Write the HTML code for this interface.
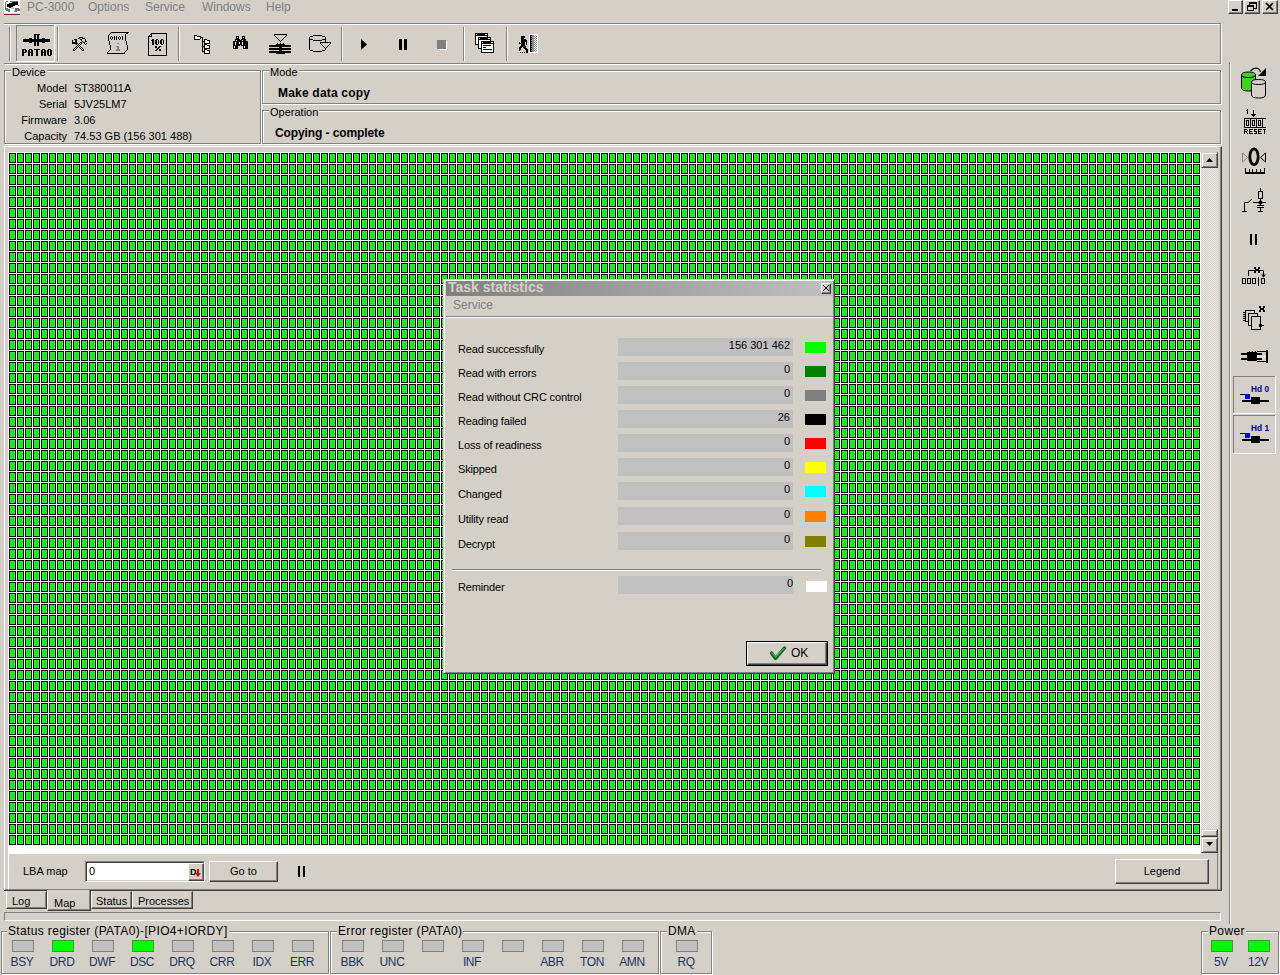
<!DOCTYPE html>
<html><head><meta charset="utf-8">
<style>
html,body{margin:0;padding:0;}
body{width:1280px;height:975px;overflow:hidden;background:#d4d0c8;position:relative;font-family:"Liberation Sans",sans-serif;font-size:11px;color:#000;}
.a{position:absolute;}
.t{position:absolute;white-space:nowrap;line-height:15px;}
.etch{position:absolute;box-sizing:border-box;border:1px solid #808080;box-shadow:inset 1px 1px 0 #fff,1px 1px 0 #fff;}
.gl{position:absolute;background:#d4d0c8;padding:0 1px;line-height:15px;white-space:nowrap;}
.btn{position:absolute;box-sizing:border-box;background:#d4d0c8;border:1px solid;border-color:#fff #404040 #404040 #fff;box-shadow:inset -1px -1px 0 #808080;text-align:center;}
.sunk{position:absolute;box-sizing:border-box;border:1px solid;border-color:#808080 #fff #fff #808080;box-shadow:inset 1px 1px 0 #404040,inset -1px -1px 0 #d4d0c8;}
.menu{color:#808080;font-size:12px;}
.led{position:absolute;box-sizing:border-box;width:22px;height:12px;border:1px solid #808080;background:#c0c0c0;}
.led.on{background:#00ff00;border-color:#3a9a3a;}
.lbl{position:absolute;margin-left:-1px;width:40px;text-align:center;color:#1c355e;font-size:12px;line-height:15px;letter-spacing:-0.4px;}
.vbox{position:absolute;left:618px;width:175px;height:18px;background:#c0c0c0;}
.val{position:absolute;right:3px;top:1px;line-height:13px;}
.rl{position:absolute;left:458px;line-height:15px;white-space:nowrap;letter-spacing:-0.15px;}
.sw{position:absolute;left:805px;width:21px;height:11px;}
</style></head><body>

<!-- menu bar -->
<div class="a" style="left:4px;top:0;width:16px;height:14px;background:#fff;"></div>
<div class="t menu" style="left:27px;top:0px;">PC-3000</div>
<div class="t menu" style="left:88px;top:0px;">Options</div>
<div class="t menu" style="left:145px;top:0px;">Service</div>
<div class="t menu" style="left:202px;top:0px;">Windows</div>
<div class="t menu" style="left:266px;top:0px;">Help</div>

<!-- window buttons -->
<div class="btn" style="left:1228px;top:0;width:15px;height:14px;"></div>
<div class="btn" style="left:1244px;top:0;width:16px;height:14px;"></div>
<div class="btn" style="left:1262px;top:0;width:16px;height:14px;"></div>

<!-- toolbar -->
<div class="a" style="left:4px;top:23px;width:1217px;height:41px;box-sizing:border-box;border:1px solid #808080;border-left:none;box-shadow:inset 0 1px 0 #fff,1px 1px 0 #fff;"></div>

<!-- device -->
<div class="etch" style="left:4px;top:70px;width:257px;height:74px;"></div>
<div class="gl" style="left:11px;top:65px;">Device</div>
<div class="t" style="left:0;width:67px;text-align:right;top:81px;">Model</div>
<div class="t" style="left:0;width:67px;text-align:right;top:97px;">Serial</div>
<div class="t" style="left:0;width:67px;text-align:right;top:113px;">Firmware</div>
<div class="t" style="left:0;width:67px;text-align:right;top:129px;">Capacity</div>
<div class="t" style="left:74px;top:81px;">ST380011A</div>
<div class="t" style="left:74px;top:97px;">5JV25LM7</div>
<div class="t" style="left:74px;top:113px;">3.06</div>
<div class="t" style="left:74px;top:129px;">74.53 GB (156 301 488)</div>

<!-- mode / operation -->
<div class="etch" style="left:262px;top:70px;width:959px;height:34px;"></div>
<div class="gl" style="left:269px;top:65px;">Mode</div>
<div class="t" style="left:278px;top:86px;font-weight:bold;font-size:12px;letter-spacing:0.2px;">Make data copy</div>
<div class="etch" style="left:262px;top:110px;width:959px;height:34px;"></div>
<div class="gl" style="left:269px;top:105px;">Operation</div>
<div class="t" style="left:275px;top:126px;font-weight:bold;font-size:12px;letter-spacing:-0.1px;">Copying - complete</div>

<!-- map frame -->
<div class="a" style="left:4px;top:146px;width:1218px;height:745px;box-sizing:border-box;border:1px solid;border-color:#fff #404040 #404040 #fff;box-shadow:inset -1px -1px 0 #808080;"></div>
<div class="a" style="left:8px;top:152px;width:1210px;height:738px;box-sizing:border-box;border:1px solid;border-color:#fff #808080 #808080 #fff;"></div>
<div class="a" style="left:8px;top:152px;width:1193px;height:702px;background:#fff;"></div>
<svg class="a" style="left:9px;top:153px;" width="1191" height="692">
<defs><pattern id="cell" width="8" height="11" patternUnits="userSpaceOnUse">
<rect x="0" y="0" width="7" height="10" fill="#000"/><rect x="1" y="1" width="5" height="8" fill="#3ee43e"/><rect x="2" y="2" width="3" height="6" fill="#10f010"/>
</pattern></defs>
<rect x="0" y="0" width="1191" height="692" fill="url(#cell)"/>
</svg>

<!-- scrollbar -->
<div class="a" style="left:1201px;top:152px;width:17px;height:701px;background-color:#ece9e4;background-image:linear-gradient(45deg,#d4d0c8 25%,transparent 25%,transparent 75%,#d4d0c8 75%),linear-gradient(45deg,#d4d0c8 25%,transparent 25%,transparent 75%,#d4d0c8 75%);background-size:2px 2px;background-position:0 0,1px 1px;"></div>
<div class="btn" style="left:1201px;top:152px;width:17px;height:16px;border-color:#d4d0c8 #404040 #404040 #d4d0c8;box-shadow:inset 1px 1px 0 #fff,inset -1px -1px 0 #808080;"></div>
<div class="btn" style="left:1201px;top:837px;width:17px;height:16px;border-color:#d4d0c8 #404040 #404040 #d4d0c8;box-shadow:inset 1px 1px 0 #fff,inset -1px -1px 0 #808080;"></div>
<div class="btn" style="left:1201px;top:829px;width:17px;height:8px;border-color:#d4d0c8 #404040 #404040 #d4d0c8;box-shadow:inset 1px 1px 0 #fff,inset -1px -1px 0 #808080;"></div>

<!-- LBA row -->
<div class="t" style="left:23px;top:864px;">LBA map</div>
<div class="sunk" style="left:85px;top:861px;width:120px;height:21px;background:#fff;"></div>
<div class="t" style="left:89px;top:864px;">0</div>
<div class="btn" style="left:188px;top:863px;width:16px;height:18px;"></div>
<div class="btn" style="left:209px;top:861px;width:69px;height:21px;line-height:19px;">Go to</div>
<div class="btn" style="left:1115px;top:859px;width:94px;height:25px;line-height:23px;">Legend</div>

<!-- tabs -->
<div class="a" style="left:4px;top:912px;width:1217px;height:9px;box-sizing:border-box;border:1px solid;border-color:#808080 #fff #fff #808080;"></div>

<!-- right separator -->
<div class="a" style="left:1229px;top:62px;width:1px;height:862px;background:#808080;"></div>
<div class="a" style="left:1230px;top:62px;width:1px;height:862px;background:#fff;"></div>

<!-- status registers -->
<div class="etch" style="left:1px;top:931px;width:328px;height:43px;"></div>
<div class="gl" style="left:7px;top:924px;font-size:12px;line-height:15px;letter-spacing:0.35px;">Status register (PATA0)-[PIO4+IORDY]</div>
<div class="etch" style="left:330px;top:931px;width:329px;height:43px;"></div>
<div class="gl" style="left:337px;top:924px;font-size:12px;line-height:15px;letter-spacing:0.35px;">Error register (PATA0)</div>
<div class="etch" style="left:660px;top:931px;width:52px;height:43px;"></div>
<div class="gl" style="left:667px;top:924px;font-size:12px;line-height:15px;letter-spacing:0.35px;">DMA</div>
<div class="etch" style="left:1201px;top:931px;width:78px;height:43px;"></div>
<div class="gl" style="left:1208px;top:924px;font-size:12px;line-height:15px;letter-spacing:0.35px;">Power</div>


<!-- ICONS -->
<svg class="a" style="left:0;top:0;" width="1280" height="975" shape-rendering="crispEdges">
<!-- app icon -->
<rect x="4" y="0" width="16" height="13" fill="#fff"/><rect x="6" y="1" width="2" height="1" fill="#707070"/><rect x="10" y="1" width="8" height="1" fill="#707070"/><rect x="5" y="2" width="1" height="1" fill="#707070"/><rect x="12" y="2" width="6" height="1" fill="#000"/><rect x="5" y="3" width="1" height="1" fill="#707070"/><rect x="9" y="3" width="9" height="1" fill="#000"/><rect x="5" y="4" width="1" height="1" fill="#707070"/><rect x="7" y="4" width="11" height="1" fill="#000"/><rect x="5" y="5" width="1" height="1" fill="#707070"/><rect x="7" y="5" width="8" height="1" fill="#000"/><rect x="18" y="5" width="1" height="1" fill="#707070"/><rect x="5" y="6" width="1" height="1" fill="#707070"/><rect x="7" y="6" width="6" height="1" fill="#000"/><rect x="5" y="7" width="1" height="1" fill="#707070"/><rect x="9" y="7" width="2" height="1" fill="#000"/><rect x="11" y="7" width="3" height="1" fill="#c8c8c8"/><rect x="5" y="8" width="3" height="1" fill="#707070"/><rect x="11" y="8" width="3" height="1" fill="#c8c8c8"/><rect x="15" y="8" width="4" height="1" fill="#707070"/><rect x="5" y="9" width="5" height="1" fill="#707070"/><rect x="15" y="9" width="5" height="1" fill="#707070"/><rect x="6" y="10" width="4" height="1" fill="#707070"/><rect x="15" y="10" width="5" height="1" fill="#707070"/><rect x="8" y="11" width="2" height="1" fill="#707070"/><rect x="14" y="11" width="3" height="1" fill="#707070"/><rect x="4" y="14" width="16" height="1" fill="#702828"/><rect x="4" y="13" width="16" height="1" fill="#f0d8d8"/>
<!-- window buttons glyphs -->
<rect x="1232" y="9" width="6" height="2" fill="#000"/>
<rect x="1249" y="2" width="7" height="6" fill="none" stroke="#000" stroke-width="1"/><rect x="1249" y="2" width="7" height="2" fill="#000"/>
<rect x="1247" y="5" width="6" height="5" fill="#d4d0c8" stroke="#000" stroke-width="1"/><rect x="1247" y="5" width="6" height="2" fill="#000"/>
<path d="M1266 3 L1273 10 M1273 3 L1266 10" stroke="#000" stroke-width="1.6" shape-rendering="auto"/>

<!-- toolbar grip + separators -->
<rect x="9" y="27" width="1" height="34" fill="#808080"/><rect x="10" y="27" width="1" height="34" fill="#fff"/>
<rect x="57" y="27" width="1" height="34" fill="#808080"/><rect x="58" y="27" width="1" height="34" fill="#fff"/>
<rect x="178" y="27" width="1" height="34" fill="#808080"/><rect x="179" y="27" width="1" height="34" fill="#fff"/>
<rect x="341" y="27" width="1" height="34" fill="#808080"/><rect x="342" y="27" width="1" height="34" fill="#fff"/>
<rect x="463" y="27" width="1" height="34" fill="#808080"/><rect x="464" y="27" width="1" height="34" fill="#fff"/>
<rect x="506" y="27" width="1" height="34" fill="#808080"/><rect x="507" y="27" width="1" height="34" fill="#fff"/>
<!-- PATA0 button sunken -->
<rect x="16" y="25" width="38" height="1" fill="#808080"/><rect x="16" y="25" width="1" height="37" fill="#808080"/>
<rect x="16" y="61" width="39" height="1" fill="#fff"/><rect x="54" y="25" width="1" height="37" fill="#fff"/>
<rect x="23" y="39" width="27" height="3" fill="#000"/>
<rect x="29" y="38" width="3" height="5" fill="#000"/><rect x="42" y="38" width="3" height="5" fill="#000"/>
<rect x="34" y="34" width="6" height="1" fill="#000"/>
<rect x="34" y="35" width="2" height="11" fill="#000"/><rect x="37" y="35" width="2" height="11" fill="#000"/>
<rect x="22" y="49" width="4" height="1" fill="#000"/><rect x="29" y="49" width="3" height="1" fill="#000"/><rect x="34" y="49" width="6" height="1" fill="#000"/><rect x="42" y="49" width="3" height="1" fill="#000"/><rect x="48" y="49" width="3" height="1" fill="#000"/><rect x="22" y="50" width="2" height="1" fill="#000"/><rect x="25" y="50" width="2" height="1" fill="#000"/><rect x="28" y="50" width="2" height="1" fill="#000"/><rect x="31" y="50" width="2" height="1" fill="#000"/><rect x="36" y="50" width="2" height="1" fill="#000"/><rect x="41" y="50" width="2" height="1" fill="#000"/><rect x="44" y="50" width="2" height="1" fill="#000"/><rect x="47" y="50" width="2" height="1" fill="#000"/><rect x="50" y="50" width="2" height="1" fill="#000"/><rect x="22" y="51" width="2" height="1" fill="#000"/><rect x="25" y="51" width="2" height="1" fill="#000"/><rect x="28" y="51" width="2" height="1" fill="#000"/><rect x="31" y="51" width="2" height="1" fill="#000"/><rect x="36" y="51" width="2" height="1" fill="#000"/><rect x="41" y="51" width="2" height="1" fill="#000"/><rect x="44" y="51" width="2" height="1" fill="#000"/><rect x="47" y="51" width="2" height="1" fill="#000"/><rect x="50" y="51" width="2" height="1" fill="#000"/><rect x="22" y="52" width="4" height="1" fill="#000"/><rect x="28" y="52" width="5" height="1" fill="#000"/><rect x="36" y="52" width="2" height="1" fill="#000"/><rect x="41" y="52" width="5" height="1" fill="#000"/><rect x="47" y="52" width="2" height="1" fill="#000"/><rect x="50" y="52" width="2" height="1" fill="#000"/><rect x="22" y="53" width="2" height="1" fill="#000"/><rect x="28" y="53" width="2" height="1" fill="#000"/><rect x="31" y="53" width="2" height="1" fill="#000"/><rect x="36" y="53" width="2" height="1" fill="#000"/><rect x="41" y="53" width="2" height="1" fill="#000"/><rect x="44" y="53" width="2" height="1" fill="#000"/><rect x="47" y="53" width="2" height="1" fill="#000"/><rect x="50" y="53" width="2" height="1" fill="#000"/><rect x="22" y="54" width="2" height="1" fill="#000"/><rect x="28" y="54" width="2" height="1" fill="#000"/><rect x="31" y="54" width="2" height="1" fill="#000"/><rect x="36" y="54" width="2" height="1" fill="#000"/><rect x="41" y="54" width="2" height="1" fill="#000"/><rect x="44" y="54" width="2" height="1" fill="#000"/><rect x="47" y="54" width="2" height="1" fill="#000"/><rect x="50" y="54" width="2" height="1" fill="#000"/><rect x="22" y="55" width="2" height="1" fill="#000"/><rect x="28" y="55" width="2" height="1" fill="#000"/><rect x="31" y="55" width="2" height="1" fill="#000"/><rect x="36" y="55" width="2" height="1" fill="#000"/><rect x="41" y="55" width="2" height="1" fill="#000"/><rect x="44" y="55" width="2" height="1" fill="#000"/><rect x="48" y="55" width="3" height="1" fill="#000"/>
<!-- tools -->
<rect x="79" y="37" width="4" height="1" fill="#000"/><rect x="78" y="38" width="2" height="1" fill="#000"/><rect x="82" y="38" width="3" height="1" fill="#000"/><rect x="74" y="39" width="3" height="1" fill="#000"/><rect x="80" y="39" width="2" height="1" fill="#000"/><rect x="85" y="39" width="1" height="1" fill="#000"/><rect x="72" y="40" width="1" height="1" fill="#000"/><rect x="75" y="40" width="2" height="1" fill="#000"/><rect x="81" y="40" width="1" height="1" fill="#000"/><rect x="85" y="40" width="1" height="1" fill="#000"/><rect x="72" y="41" width="1" height="1" fill="#000"/><rect x="75" y="41" width="2" height="1" fill="#000"/><rect x="82" y="41" width="1" height="1" fill="#000"/><rect x="85" y="41" width="2" height="1" fill="#000"/><rect x="72" y="42" width="5" height="1" fill="#000"/><rect x="80" y="42" width="2" height="1" fill="#000"/><rect x="83" y="42" width="2" height="1" fill="#000"/><rect x="72" y="43" width="6" height="1" fill="#000"/><rect x="79" y="43" width="1" height="1" fill="#000"/><rect x="81" y="43" width="1" height="1" fill="#000"/><rect x="84" y="43" width="1" height="1" fill="#000"/><rect x="86" y="43" width="1" height="1" fill="#000"/><rect x="76" y="44" width="1" height="1" fill="#000"/><rect x="78" y="44" width="1" height="1" fill="#000"/><rect x="80" y="44" width="1" height="1" fill="#000"/><rect x="85" y="44" width="1" height="1" fill="#000"/><rect x="77" y="45" width="1" height="1" fill="#000"/><rect x="79" y="45" width="1" height="1" fill="#000"/><rect x="76" y="46" width="1" height="1" fill="#000"/><rect x="78" y="46" width="1" height="1" fill="#000"/><rect x="80" y="46" width="1" height="1" fill="#000"/><rect x="75" y="47" width="1" height="1" fill="#000"/><rect x="77" y="47" width="1" height="1" fill="#000"/><rect x="79" y="47" width="1" height="1" fill="#000"/><rect x="81" y="47" width="1" height="1" fill="#000"/><rect x="74" y="48" width="1" height="1" fill="#000"/><rect x="76" y="48" width="1" height="1" fill="#000"/><rect x="80" y="48" width="1" height="1" fill="#000"/><rect x="82" y="48" width="1" height="1" fill="#000"/><rect x="73" y="49" width="1" height="1" fill="#000"/><rect x="75" y="49" width="1" height="1" fill="#000"/><rect x="81" y="49" width="1" height="1" fill="#000"/><rect x="83" y="49" width="1" height="1" fill="#000"/><rect x="73" y="50" width="2" height="1" fill="#000"/><rect x="82" y="50" width="2" height="1" fill="#000"/>
<!-- scroll icon -->
<rect x="111" y="32" width="18" height="1" fill="#000"/><rect x="110" y="33" width="1" height="1" fill="#000"/><rect x="126" y="33" width="2" height="1" fill="#000"/><rect x="109" y="34" width="1" height="1" fill="#000"/><rect x="125" y="34" width="1" height="1" fill="#000"/><rect x="108" y="35" width="1" height="1" fill="#000"/><rect x="125" y="35" width="1" height="1" fill="#000"/><rect x="108" y="36" width="1" height="1" fill="#000"/><rect x="111" y="36" width="1" height="1" fill="#000"/><rect x="114" y="36" width="1" height="1" fill="#000"/><rect x="116" y="36" width="1" height="1" fill="#000"/><rect x="119" y="36" width="1" height="1" fill="#000"/><rect x="122" y="36" width="1" height="1" fill="#000"/><rect x="125" y="36" width="1" height="1" fill="#000"/><rect x="108" y="37" width="1" height="1" fill="#000"/><rect x="110" y="37" width="1" height="1" fill="#000"/><rect x="112" y="37" width="1" height="1" fill="#000"/><rect x="114" y="37" width="1" height="1" fill="#000"/><rect x="116" y="37" width="1" height="1" fill="#000"/><rect x="118" y="37" width="1" height="1" fill="#000"/><rect x="120" y="37" width="1" height="1" fill="#000"/><rect x="122" y="37" width="1" height="1" fill="#000"/><rect x="125" y="37" width="1" height="1" fill="#000"/><rect x="108" y="38" width="1" height="1" fill="#000"/><rect x="110" y="38" width="1" height="1" fill="#000"/><rect x="112" y="38" width="1" height="1" fill="#000"/><rect x="114" y="38" width="1" height="1" fill="#000"/><rect x="116" y="38" width="1" height="1" fill="#000"/><rect x="118" y="38" width="1" height="1" fill="#000"/><rect x="120" y="38" width="1" height="1" fill="#000"/><rect x="122" y="38" width="1" height="1" fill="#000"/><rect x="125" y="38" width="1" height="1" fill="#000"/><rect x="108" y="39" width="1" height="1" fill="#000"/><rect x="111" y="39" width="1" height="1" fill="#000"/><rect x="114" y="39" width="1" height="1" fill="#000"/><rect x="116" y="39" width="1" height="1" fill="#000"/><rect x="119" y="39" width="1" height="1" fill="#000"/><rect x="122" y="39" width="1" height="1" fill="#000"/><rect x="125" y="39" width="1" height="1" fill="#000"/><rect x="108" y="40" width="1" height="1" fill="#000"/><rect x="125" y="40" width="1" height="1" fill="#000"/><rect x="109" y="41" width="1" height="1" fill="#000"/><rect x="126" y="41" width="1" height="1" fill="#000"/><rect x="109" y="42" width="1" height="1" fill="#000"/><rect x="126" y="42" width="1" height="1" fill="#000"/><rect x="109" y="43" width="1" height="1" fill="#000"/><rect x="117" y="43" width="2" height="1" fill="#888"/><rect x="126" y="43" width="1" height="1" fill="#000"/><rect x="109" y="44" width="1" height="1" fill="#000"/><rect x="126" y="44" width="1" height="1" fill="#000"/><rect x="110" y="45" width="1" height="1" fill="#000"/><rect x="127" y="45" width="1" height="1" fill="#000"/><rect x="110" y="46" width="1" height="1" fill="#000"/><rect x="116" y="46" width="3" height="1" fill="#888"/><rect x="127" y="46" width="1" height="1" fill="#000"/><rect x="110" y="47" width="1" height="1" fill="#000"/><rect x="117" y="47" width="2" height="1" fill="#888"/><rect x="127" y="47" width="1" height="1" fill="#000"/><rect x="110" y="48" width="1" height="1" fill="#000"/><rect x="117" y="48" width="2" height="1" fill="#888"/><rect x="127" y="48" width="1" height="1" fill="#000"/><rect x="110" y="49" width="1" height="1" fill="#000"/><rect x="116" y="49" width="4" height="1" fill="#888"/><rect x="127" y="49" width="1" height="1" fill="#000"/><rect x="109" y="50" width="1" height="1" fill="#000"/><rect x="116" y="50" width="4" height="1" fill="#888"/><rect x="126" y="50" width="1" height="1" fill="#000"/><rect x="108" y="51" width="1" height="1" fill="#000"/><rect x="125" y="51" width="1" height="1" fill="#000"/><rect x="107" y="52" width="1" height="1" fill="#000"/><rect x="124" y="52" width="1" height="1" fill="#000"/><rect x="107" y="53" width="18" height="1" fill="#000"/>
<!-- 100% doc -->
<rect x="151" y="33" width="16" height="1" fill="#000"/><rect x="150" y="34" width="2" height="1" fill="#000"/><rect x="166" y="34" width="1" height="1" fill="#000"/><rect x="149" y="35" width="1" height="1" fill="#000"/><rect x="151" y="35" width="1" height="1" fill="#000"/><rect x="166" y="35" width="1" height="1" fill="#000"/><rect x="148" y="36" width="4" height="1" fill="#000"/><rect x="166" y="36" width="1" height="1" fill="#000"/><rect x="148" y="37" width="1" height="1" fill="#000"/><rect x="166" y="37" width="1" height="1" fill="#000"/><rect x="148" y="38" width="1" height="1" fill="#000"/><rect x="166" y="38" width="1" height="1" fill="#000"/><rect x="148" y="39" width="1" height="1" fill="#000"/><rect x="152" y="39" width="2" height="1" fill="#000"/><rect x="156" y="39" width="2" height="1" fill="#000"/><rect x="161" y="39" width="2" height="1" fill="#000"/><rect x="166" y="39" width="1" height="1" fill="#000"/><rect x="148" y="40" width="1" height="1" fill="#000"/><rect x="151" y="40" width="3" height="1" fill="#000"/><rect x="155" y="40" width="2" height="1" fill="#000"/><rect x="158" y="40" width="1" height="1" fill="#000"/><rect x="160" y="40" width="2" height="1" fill="#000"/><rect x="163" y="40" width="1" height="1" fill="#000"/><rect x="166" y="40" width="1" height="1" fill="#000"/><rect x="148" y="41" width="1" height="1" fill="#000"/><rect x="152" y="41" width="2" height="1" fill="#000"/><rect x="155" y="41" width="2" height="1" fill="#000"/><rect x="158" y="41" width="1" height="1" fill="#000"/><rect x="160" y="41" width="2" height="1" fill="#000"/><rect x="163" y="41" width="1" height="1" fill="#000"/><rect x="166" y="41" width="1" height="1" fill="#000"/><rect x="148" y="42" width="1" height="1" fill="#000"/><rect x="152" y="42" width="2" height="1" fill="#000"/><rect x="155" y="42" width="2" height="1" fill="#000"/><rect x="158" y="42" width="1" height="1" fill="#000"/><rect x="160" y="42" width="2" height="1" fill="#000"/><rect x="163" y="42" width="1" height="1" fill="#000"/><rect x="166" y="42" width="1" height="1" fill="#000"/><rect x="148" y="43" width="1" height="1" fill="#000"/><rect x="152" y="43" width="2" height="1" fill="#000"/><rect x="155" y="43" width="2" height="1" fill="#000"/><rect x="158" y="43" width="1" height="1" fill="#000"/><rect x="160" y="43" width="2" height="1" fill="#000"/><rect x="163" y="43" width="1" height="1" fill="#000"/><rect x="166" y="43" width="1" height="1" fill="#000"/><rect x="148" y="44" width="1" height="1" fill="#000"/><rect x="152" y="44" width="2" height="1" fill="#000"/><rect x="156" y="44" width="2" height="1" fill="#000"/><rect x="161" y="44" width="2" height="1" fill="#000"/><rect x="166" y="44" width="1" height="1" fill="#000"/><rect x="148" y="45" width="1" height="1" fill="#000"/><rect x="166" y="45" width="1" height="1" fill="#000"/><rect x="148" y="46" width="1" height="1" fill="#000"/><rect x="155" y="46" width="2" height="1" fill="#000"/><rect x="159" y="46" width="2" height="1" fill="#000"/><rect x="166" y="46" width="1" height="1" fill="#000"/><rect x="148" y="47" width="1" height="1" fill="#000"/><rect x="155" y="47" width="2" height="1" fill="#000"/><rect x="158" y="47" width="2" height="1" fill="#000"/><rect x="166" y="47" width="1" height="1" fill="#000"/><rect x="148" y="48" width="1" height="1" fill="#000"/><rect x="157" y="48" width="2" height="1" fill="#000"/><rect x="166" y="48" width="1" height="1" fill="#000"/><rect x="148" y="49" width="1" height="1" fill="#000"/><rect x="156" y="49" width="2" height="1" fill="#000"/><rect x="159" y="49" width="2" height="1" fill="#000"/><rect x="166" y="49" width="1" height="1" fill="#000"/><rect x="148" y="50" width="1" height="1" fill="#000"/><rect x="155" y="50" width="2" height="1" fill="#000"/><rect x="159" y="50" width="2" height="1" fill="#000"/><rect x="166" y="50" width="1" height="1" fill="#000"/><rect x="148" y="51" width="1" height="1" fill="#000"/><rect x="166" y="51" width="1" height="1" fill="#000"/><rect x="148" y="52" width="1" height="1" fill="#000"/><rect x="166" y="52" width="1" height="1" fill="#000"/><rect x="148" y="53" width="1" height="1" fill="#000"/><rect x="166" y="53" width="1" height="1" fill="#000"/><rect x="148" y="54" width="1" height="1" fill="#000"/><rect x="166" y="54" width="1" height="1" fill="#000"/><rect x="148" y="55" width="19" height="1" fill="#000"/>
<!-- tree -->
<rect x="194" y="35" width="3" height="1" fill="#000"/><rect x="194" y="36" width="1" height="1" fill="#000"/><rect x="195" y="36" width="2" height="1" fill="#fff"/><rect x="197" y="36" width="4" height="1" fill="#000"/><rect x="194" y="37" width="1" height="1" fill="#000"/><rect x="195" y="37" width="5" height="1" fill="#fff"/><rect x="200" y="37" width="3" height="1" fill="#000"/><rect x="194" y="38" width="1" height="1" fill="#000"/><rect x="195" y="38" width="5" height="1" fill="#fff"/><rect x="200" y="38" width="1" height="1" fill="#000"/><rect x="202" y="38" width="1" height="1" fill="#000"/><rect x="194" y="39" width="6" height="1" fill="#000"/><rect x="202" y="39" width="1" height="1" fill="#000"/><rect x="204" y="39" width="3" height="1" fill="#000"/><rect x="202" y="40" width="1" height="1" fill="#000"/><rect x="204" y="40" width="1" height="1" fill="#000"/><rect x="205" y="40" width="2" height="1" fill="#fff"/><rect x="207" y="40" width="3" height="1" fill="#000"/><rect x="202" y="41" width="3" height="1" fill="#000"/><rect x="205" y="41" width="4" height="1" fill="#fff"/><rect x="209" y="41" width="1" height="1" fill="#000"/><rect x="202" y="42" width="1" height="1" fill="#000"/><rect x="204" y="42" width="1" height="1" fill="#000"/><rect x="205" y="42" width="4" height="1" fill="#fff"/><rect x="209" y="42" width="1" height="1" fill="#000"/><rect x="202" y="43" width="1" height="1" fill="#000"/><rect x="204" y="43" width="6" height="1" fill="#000"/><rect x="202" y="44" width="1" height="1" fill="#000"/><rect x="204" y="44" width="3" height="1" fill="#000"/><rect x="202" y="45" width="1" height="1" fill="#000"/><rect x="204" y="45" width="1" height="1" fill="#000"/><rect x="205" y="45" width="2" height="1" fill="#fff"/><rect x="207" y="45" width="3" height="1" fill="#000"/><rect x="202" y="46" width="3" height="1" fill="#000"/><rect x="205" y="46" width="4" height="1" fill="#fff"/><rect x="209" y="46" width="1" height="1" fill="#000"/><rect x="202" y="47" width="1" height="1" fill="#000"/><rect x="204" y="47" width="1" height="1" fill="#000"/><rect x="205" y="47" width="4" height="1" fill="#fff"/><rect x="209" y="47" width="1" height="1" fill="#000"/><rect x="202" y="48" width="1" height="1" fill="#000"/><rect x="204" y="48" width="6" height="1" fill="#000"/><rect x="202" y="49" width="1" height="1" fill="#000"/><rect x="204" y="49" width="3" height="1" fill="#000"/><rect x="202" y="50" width="1" height="1" fill="#000"/><rect x="204" y="50" width="1" height="1" fill="#000"/><rect x="205" y="50" width="2" height="1" fill="#fff"/><rect x="207" y="50" width="3" height="1" fill="#000"/><rect x="202" y="51" width="3" height="1" fill="#000"/><rect x="205" y="51" width="4" height="1" fill="#fff"/><rect x="209" y="51" width="1" height="1" fill="#000"/><rect x="204" y="52" width="1" height="1" fill="#000"/><rect x="205" y="52" width="4" height="1" fill="#fff"/><rect x="209" y="52" width="1" height="1" fill="#000"/><rect x="204" y="53" width="6" height="1" fill="#000"/>
<!-- binoculars -->
<rect x="236" y="36" width="3" height="1" fill="#000"/><rect x="242" y="36" width="3" height="1" fill="#000"/><rect x="236" y="37" width="1" height="1" fill="#000"/><rect x="237" y="37" width="1" height="1" fill="#fff"/><rect x="238" y="37" width="1" height="1" fill="#000"/><rect x="242" y="37" width="1" height="1" fill="#000"/><rect x="243" y="37" width="1" height="1" fill="#fff"/><rect x="244" y="37" width="1" height="1" fill="#000"/><rect x="236" y="38" width="3" height="1" fill="#000"/><rect x="242" y="38" width="3" height="1" fill="#000"/><rect x="235" y="39" width="5" height="1" fill="#000"/><rect x="241" y="39" width="5" height="1" fill="#000"/><rect x="235" y="40" width="1" height="1" fill="#000"/><rect x="236" y="40" width="1" height="1" fill="#fff"/><rect x="237" y="40" width="5" height="1" fill="#000"/><rect x="242" y="40" width="1" height="1" fill="#fff"/><rect x="243" y="40" width="3" height="1" fill="#000"/><rect x="233" y="41" width="15" height="1" fill="#000"/><rect x="233" y="42" width="2" height="1" fill="#000"/><rect x="235" y="42" width="1" height="1" fill="#fff"/><rect x="236" y="42" width="3" height="1" fill="#000"/><rect x="239" y="42" width="1" height="1" fill="#fff"/><rect x="240" y="42" width="2" height="1" fill="#000"/><rect x="242" y="42" width="1" height="1" fill="#fff"/><rect x="243" y="42" width="5" height="1" fill="#000"/><rect x="233" y="43" width="2" height="1" fill="#000"/><rect x="235" y="43" width="1" height="1" fill="#fff"/><rect x="236" y="43" width="3" height="1" fill="#000"/><rect x="239" y="43" width="1" height="1" fill="#fff"/><rect x="240" y="43" width="2" height="1" fill="#000"/><rect x="242" y="43" width="1" height="1" fill="#fff"/><rect x="243" y="43" width="5" height="1" fill="#000"/><rect x="233" y="44" width="2" height="1" fill="#000"/><rect x="235" y="44" width="1" height="1" fill="#fff"/><rect x="236" y="44" width="6" height="1" fill="#000"/><rect x="242" y="44" width="1" height="1" fill="#fff"/><rect x="243" y="44" width="5" height="1" fill="#000"/><rect x="233" y="45" width="7" height="1" fill="#000"/><rect x="241" y="45" width="7" height="1" fill="#000"/><rect x="233" y="46" width="1" height="1" fill="#000"/><rect x="234" y="46" width="1" height="1" fill="#fff"/><rect x="235" y="46" width="3" height="1" fill="#000"/><rect x="243" y="46" width="1" height="1" fill="#000"/><rect x="244" y="46" width="1" height="1" fill="#fff"/><rect x="245" y="46" width="3" height="1" fill="#000"/><rect x="233" y="47" width="1" height="1" fill="#000"/><rect x="234" y="47" width="1" height="1" fill="#fff"/><rect x="235" y="47" width="3" height="1" fill="#000"/><rect x="243" y="47" width="1" height="1" fill="#000"/><rect x="244" y="47" width="1" height="1" fill="#fff"/><rect x="245" y="47" width="3" height="1" fill="#000"/><rect x="233" y="48" width="5" height="1" fill="#000"/><rect x="243" y="48" width="5" height="1" fill="#000"/>
<!-- triangle + layers -->
<rect x="274" y="34" width="13" height="1" fill="#000"/><rect x="274" y="35" width="1" height="1" fill="#000"/><rect x="286" y="35" width="1" height="1" fill="#000"/><rect x="275" y="36" width="1" height="1" fill="#000"/><rect x="285" y="36" width="1" height="1" fill="#000"/><rect x="276" y="37" width="1" height="1" fill="#000"/><rect x="284" y="37" width="1" height="1" fill="#000"/><rect x="277" y="38" width="1" height="1" fill="#000"/><rect x="283" y="38" width="1" height="1" fill="#000"/><rect x="278" y="39" width="1" height="1" fill="#000"/><rect x="282" y="39" width="1" height="1" fill="#000"/><rect x="279" y="40" width="1" height="1" fill="#000"/><rect x="281" y="40" width="1" height="1" fill="#000"/><rect x="280" y="41" width="1" height="1" fill="#000"/><rect x="277" y="43" width="1" height="1" fill="#000"/><rect x="280" y="43" width="1" height="1" fill="#000"/><rect x="283" y="43" width="1" height="1" fill="#000"/><rect x="276" y="44" width="9" height="1" fill="#000"/><rect x="269" y="45" width="22" height="1" fill="#000"/><rect x="269" y="46" width="22" height="1" fill="#000"/><rect x="279" y="47" width="3" height="1" fill="#000"/><rect x="269" y="48" width="22" height="1" fill="#000"/><rect x="269" y="49" width="22" height="1" fill="#000"/><rect x="279" y="50" width="3" height="1" fill="#000"/><rect x="269" y="51" width="22" height="1" fill="#000"/><rect x="269" y="52" width="22" height="1" fill="#000"/><rect x="276" y="53" width="9" height="1" fill="#000"/>
<!-- disk arrow -->
<rect x="313" y="35" width="9" height="1" fill="#000"/><rect x="310" y="36" width="3" height="1" fill="#000"/><rect x="322" y="36" width="3" height="1" fill="#000"/><rect x="309" y="37" width="1" height="1" fill="#000"/><rect x="325" y="37" width="1" height="1" fill="#000"/><rect x="309" y="38" width="1" height="1" fill="#000"/><rect x="325" y="38" width="1" height="1" fill="#000"/><rect x="309" y="39" width="4" height="1" fill="#000"/><rect x="322" y="39" width="4" height="1" fill="#000"/><rect x="309" y="40" width="1" height="1" fill="#000"/><rect x="313" y="40" width="9" height="1" fill="#000"/><rect x="325" y="40" width="1" height="1" fill="#000"/><rect x="309" y="41" width="1" height="1" fill="#000"/><rect x="325" y="41" width="1" height="1" fill="#000"/><rect x="309" y="42" width="1" height="1" fill="#000"/><rect x="320" y="42" width="11" height="1" fill="#000"/><rect x="309" y="43" width="1" height="1" fill="#000"/><rect x="320" y="43" width="1" height="1" fill="#000"/><rect x="330" y="43" width="1" height="1" fill="#000"/><rect x="309" y="44" width="1" height="1" fill="#000"/><rect x="321" y="44" width="1" height="1" fill="#000"/><rect x="329" y="44" width="1" height="1" fill="#000"/><rect x="309" y="45" width="1" height="1" fill="#000"/><rect x="322" y="45" width="1" height="1" fill="#000"/><rect x="328" y="45" width="1" height="1" fill="#000"/><rect x="309" y="46" width="1" height="1" fill="#000"/><rect x="323" y="46" width="1" height="1" fill="#000"/><rect x="327" y="46" width="1" height="1" fill="#000"/><rect x="309" y="47" width="1" height="1" fill="#000"/><rect x="324" y="47" width="1" height="1" fill="#000"/><rect x="326" y="47" width="1" height="1" fill="#000"/><rect x="309" y="48" width="1" height="1" fill="#000"/><rect x="325" y="48" width="1" height="1" fill="#000"/><rect x="309" y="49" width="1" height="1" fill="#000"/><rect x="325" y="49" width="1" height="1" fill="#000"/><rect x="310" y="50" width="3" height="1" fill="#000"/><rect x="322" y="50" width="3" height="1" fill="#000"/><rect x="313" y="51" width="9" height="1" fill="#000"/>
<!-- play pause stop -->
<path d="M361 39 L367 44.5 L361 50 Z" fill="#000" shape-rendering="auto"/>
<rect x="399" y="39" width="3" height="11" fill="#000"/><rect x="404" y="39" width="3" height="11" fill="#000"/>
<rect x="438" y="41" width="9" height="9" fill="#fff"/><rect x="437" y="40" width="9" height="9" fill="#808080"/>
<!-- windows -->
<rect x="475" y="33" width="13" height="1" fill="#000"/><rect x="475" y="34" width="1" height="1" fill="#000"/><rect x="476" y="34" width="1" height="1" fill="#fff"/><rect x="477" y="34" width="8" height="1" fill="#000"/><rect x="485" y="34" width="2" height="1" fill="#fff"/><rect x="487" y="34" width="1" height="1" fill="#000"/><rect x="475" y="35" width="13" height="1" fill="#000"/><rect x="475" y="36" width="1" height="1" fill="#000"/><rect x="476" y="36" width="11" height="1" fill="#fff"/><rect x="487" y="36" width="1" height="1" fill="#000"/><rect x="475" y="37" width="1" height="1" fill="#000"/><rect x="476" y="37" width="2" height="1" fill="#fff"/><rect x="478" y="37" width="13" height="1" fill="#000"/><rect x="475" y="38" width="1" height="1" fill="#000"/><rect x="476" y="38" width="2" height="1" fill="#fff"/><rect x="478" y="38" width="1" height="1" fill="#000"/><rect x="479" y="38" width="1" height="1" fill="#fff"/><rect x="480" y="38" width="8" height="1" fill="#000"/><rect x="488" y="38" width="2" height="1" fill="#fff"/><rect x="490" y="38" width="1" height="1" fill="#000"/><rect x="475" y="39" width="1" height="1" fill="#000"/><rect x="476" y="39" width="2" height="1" fill="#fff"/><rect x="478" y="39" width="13" height="1" fill="#000"/><rect x="475" y="40" width="1" height="1" fill="#000"/><rect x="476" y="40" width="2" height="1" fill="#fff"/><rect x="478" y="40" width="1" height="1" fill="#000"/><rect x="479" y="40" width="11" height="1" fill="#fff"/><rect x="490" y="40" width="1" height="1" fill="#000"/><rect x="475" y="41" width="1" height="1" fill="#000"/><rect x="476" y="41" width="2" height="1" fill="#fff"/><rect x="478" y="41" width="1" height="1" fill="#000"/><rect x="479" y="41" width="2" height="1" fill="#fff"/><rect x="481" y="41" width="13" height="1" fill="#000"/><rect x="475" y="42" width="1" height="1" fill="#000"/><rect x="476" y="42" width="2" height="1" fill="#fff"/><rect x="478" y="42" width="1" height="1" fill="#000"/><rect x="479" y="42" width="2" height="1" fill="#fff"/><rect x="481" y="42" width="1" height="1" fill="#000"/><rect x="482" y="42" width="1" height="1" fill="#fff"/><rect x="483" y="42" width="8" height="1" fill="#000"/><rect x="491" y="42" width="2" height="1" fill="#fff"/><rect x="493" y="42" width="1" height="1" fill="#000"/><rect x="475" y="43" width="1" height="1" fill="#000"/><rect x="476" y="43" width="2" height="1" fill="#fff"/><rect x="478" y="43" width="1" height="1" fill="#000"/><rect x="479" y="43" width="2" height="1" fill="#fff"/><rect x="481" y="43" width="13" height="1" fill="#000"/><rect x="475" y="44" width="4" height="1" fill="#000"/><rect x="479" y="44" width="2" height="1" fill="#fff"/><rect x="481" y="44" width="1" height="1" fill="#000"/><rect x="482" y="44" width="11" height="1" fill="#fff"/><rect x="493" y="44" width="1" height="1" fill="#000"/><rect x="478" y="45" width="1" height="1" fill="#000"/><rect x="479" y="45" width="2" height="1" fill="#fff"/><rect x="481" y="45" width="1" height="1" fill="#000"/><rect x="482" y="45" width="1" height="1" fill="#fff"/><rect x="483" y="45" width="8" height="1" fill="#000"/><rect x="491" y="45" width="2" height="1" fill="#fff"/><rect x="493" y="45" width="1" height="1" fill="#000"/><rect x="478" y="46" width="1" height="1" fill="#000"/><rect x="479" y="46" width="2" height="1" fill="#fff"/><rect x="481" y="46" width="1" height="1" fill="#000"/><rect x="482" y="46" width="11" height="1" fill="#fff"/><rect x="493" y="46" width="1" height="1" fill="#000"/><rect x="478" y="47" width="1" height="1" fill="#000"/><rect x="479" y="47" width="2" height="1" fill="#fff"/><rect x="481" y="47" width="1" height="1" fill="#000"/><rect x="482" y="47" width="1" height="1" fill="#fff"/><rect x="483" y="47" width="3" height="1" fill="#000"/><rect x="486" y="47" width="7" height="1" fill="#fff"/><rect x="493" y="47" width="1" height="1" fill="#000"/><rect x="478" y="48" width="4" height="1" fill="#000"/><rect x="482" y="48" width="11" height="1" fill="#fff"/><rect x="493" y="48" width="1" height="1" fill="#000"/><rect x="481" y="49" width="1" height="1" fill="#000"/><rect x="482" y="49" width="1" height="1" fill="#fff"/><rect x="483" y="49" width="9" height="1" fill="#000"/><rect x="492" y="49" width="1" height="1" fill="#fff"/><rect x="493" y="49" width="1" height="1" fill="#000"/><rect x="481" y="50" width="1" height="1" fill="#000"/><rect x="482" y="50" width="11" height="1" fill="#fff"/><rect x="493" y="50" width="1" height="1" fill="#000"/><rect x="481" y="51" width="1" height="1" fill="#000"/><rect x="482" y="51" width="11" height="1" fill="#fff"/><rect x="493" y="51" width="1" height="1" fill="#000"/><rect x="481" y="52" width="13" height="1" fill="#000"/>
<!-- running man -->
<rect x="529" y="34" width="9" height="1" fill="#fff"/><rect x="529" y="35" width="1" height="1" fill="#fff"/><rect x="530" y="35" width="2" height="1" fill="#000"/><rect x="532" y="35" width="2" height="1" fill="#8a8a8a"/><rect x="534" y="35" width="1" height="1" fill="#fff"/><rect x="535" y="35" width="1" height="1" fill="#8a8a8a"/><rect x="536" y="35" width="2" height="1" fill="#fff"/><rect x="521" y="36" width="4" height="1" fill="#000"/><rect x="529" y="36" width="1" height="1" fill="#fff"/><rect x="530" y="36" width="1" height="1" fill="#000"/><rect x="531" y="36" width="4" height="1" fill="#8a8a8a"/><rect x="535" y="36" width="1" height="1" fill="#fff"/><rect x="536" y="36" width="1" height="1" fill="#8a8a8a"/><rect x="537" y="36" width="1" height="1" fill="#fff"/><rect x="521" y="37" width="4" height="1" fill="#000"/><rect x="529" y="37" width="1" height="1" fill="#fff"/><rect x="530" y="37" width="2" height="1" fill="#000"/><rect x="532" y="37" width="2" height="1" fill="#8a8a8a"/><rect x="534" y="37" width="1" height="1" fill="#fff"/><rect x="535" y="37" width="1" height="1" fill="#8a8a8a"/><rect x="536" y="37" width="2" height="1" fill="#fff"/><rect x="521" y="38" width="3" height="1" fill="#000"/><rect x="529" y="38" width="1" height="1" fill="#fff"/><rect x="530" y="38" width="1" height="1" fill="#000"/><rect x="531" y="38" width="4" height="1" fill="#8a8a8a"/><rect x="535" y="38" width="1" height="1" fill="#fff"/><rect x="536" y="38" width="1" height="1" fill="#8a8a8a"/><rect x="537" y="38" width="1" height="1" fill="#fff"/><rect x="521" y="39" width="5" height="1" fill="#000"/><rect x="529" y="39" width="1" height="1" fill="#fff"/><rect x="530" y="39" width="2" height="1" fill="#000"/><rect x="532" y="39" width="2" height="1" fill="#8a8a8a"/><rect x="534" y="39" width="1" height="1" fill="#fff"/><rect x="535" y="39" width="1" height="1" fill="#8a8a8a"/><rect x="536" y="39" width="2" height="1" fill="#fff"/><rect x="521" y="40" width="6" height="1" fill="#000"/><rect x="529" y="40" width="1" height="1" fill="#fff"/><rect x="530" y="40" width="1" height="1" fill="#000"/><rect x="531" y="40" width="4" height="1" fill="#8a8a8a"/><rect x="535" y="40" width="1" height="1" fill="#fff"/><rect x="536" y="40" width="1" height="1" fill="#8a8a8a"/><rect x="537" y="40" width="1" height="1" fill="#fff"/><rect x="521" y="41" width="6" height="1" fill="#000"/><rect x="529" y="41" width="1" height="1" fill="#fff"/><rect x="530" y="41" width="2" height="1" fill="#000"/><rect x="532" y="41" width="2" height="1" fill="#8a8a8a"/><rect x="534" y="41" width="1" height="1" fill="#fff"/><rect x="535" y="41" width="1" height="1" fill="#8a8a8a"/><rect x="536" y="41" width="2" height="1" fill="#fff"/><rect x="519" y="42" width="1" height="1" fill="#000"/><rect x="521" y="42" width="4" height="1" fill="#000"/><rect x="526" y="42" width="1" height="1" fill="#000"/><rect x="529" y="42" width="1" height="1" fill="#fff"/><rect x="530" y="42" width="1" height="1" fill="#000"/><rect x="531" y="42" width="4" height="1" fill="#8a8a8a"/><rect x="535" y="42" width="1" height="1" fill="#fff"/><rect x="536" y="42" width="1" height="1" fill="#8a8a8a"/><rect x="537" y="42" width="1" height="1" fill="#fff"/><rect x="519" y="43" width="6" height="1" fill="#000"/><rect x="526" y="43" width="1" height="1" fill="#000"/><rect x="529" y="43" width="1" height="1" fill="#fff"/><rect x="530" y="43" width="2" height="1" fill="#000"/><rect x="532" y="43" width="2" height="1" fill="#8a8a8a"/><rect x="534" y="43" width="1" height="1" fill="#fff"/><rect x="535" y="43" width="1" height="1" fill="#8a8a8a"/><rect x="536" y="43" width="2" height="1" fill="#fff"/><rect x="521" y="44" width="4" height="1" fill="#000"/><rect x="526" y="44" width="1" height="1" fill="#000"/><rect x="529" y="44" width="1" height="1" fill="#fff"/><rect x="530" y="44" width="1" height="1" fill="#000"/><rect x="531" y="44" width="4" height="1" fill="#8a8a8a"/><rect x="535" y="44" width="1" height="1" fill="#fff"/><rect x="536" y="44" width="1" height="1" fill="#8a8a8a"/><rect x="537" y="44" width="1" height="1" fill="#fff"/><rect x="521" y="45" width="4" height="1" fill="#000"/><rect x="529" y="45" width="1" height="1" fill="#fff"/><rect x="530" y="45" width="2" height="1" fill="#000"/><rect x="532" y="45" width="2" height="1" fill="#8a8a8a"/><rect x="534" y="45" width="1" height="1" fill="#fff"/><rect x="535" y="45" width="1" height="1" fill="#8a8a8a"/><rect x="536" y="45" width="2" height="1" fill="#fff"/><rect x="520" y="46" width="6" height="1" fill="#000"/><rect x="529" y="46" width="1" height="1" fill="#fff"/><rect x="530" y="46" width="1" height="1" fill="#000"/><rect x="531" y="46" width="4" height="1" fill="#8a8a8a"/><rect x="535" y="46" width="1" height="1" fill="#fff"/><rect x="536" y="46" width="1" height="1" fill="#8a8a8a"/><rect x="537" y="46" width="1" height="1" fill="#fff"/><rect x="519" y="47" width="3" height="1" fill="#000"/><rect x="523" y="47" width="3" height="1" fill="#000"/><rect x="529" y="47" width="1" height="1" fill="#fff"/><rect x="530" y="47" width="2" height="1" fill="#000"/><rect x="532" y="47" width="2" height="1" fill="#8a8a8a"/><rect x="534" y="47" width="1" height="1" fill="#fff"/><rect x="535" y="47" width="1" height="1" fill="#8a8a8a"/><rect x="536" y="47" width="2" height="1" fill="#fff"/><rect x="519" y="48" width="2" height="1" fill="#000"/><rect x="524" y="48" width="3" height="1" fill="#000"/><rect x="529" y="48" width="1" height="1" fill="#fff"/><rect x="530" y="48" width="1" height="1" fill="#000"/><rect x="531" y="48" width="4" height="1" fill="#8a8a8a"/><rect x="535" y="48" width="1" height="1" fill="#fff"/><rect x="536" y="48" width="1" height="1" fill="#8a8a8a"/><rect x="537" y="48" width="1" height="1" fill="#fff"/><rect x="519" y="49" width="2" height="1" fill="#000"/><rect x="525" y="49" width="3" height="1" fill="#000"/><rect x="529" y="49" width="1" height="1" fill="#fff"/><rect x="530" y="49" width="2" height="1" fill="#000"/><rect x="532" y="49" width="2" height="1" fill="#8a8a8a"/><rect x="534" y="49" width="1" height="1" fill="#fff"/><rect x="535" y="49" width="1" height="1" fill="#8a8a8a"/><rect x="536" y="49" width="2" height="1" fill="#fff"/><rect x="519" y="50" width="1" height="1" fill="#000"/><rect x="526" y="50" width="2" height="1" fill="#000"/><rect x="529" y="50" width="1" height="1" fill="#fff"/><rect x="530" y="50" width="1" height="1" fill="#000"/><rect x="531" y="50" width="4" height="1" fill="#8a8a8a"/><rect x="535" y="50" width="1" height="1" fill="#fff"/><rect x="536" y="50" width="1" height="1" fill="#8a8a8a"/><rect x="537" y="50" width="1" height="1" fill="#fff"/><rect x="526" y="51" width="2" height="1" fill="#000"/><rect x="529" y="51" width="1" height="1" fill="#fff"/><rect x="530" y="51" width="2" height="1" fill="#000"/><rect x="532" y="51" width="2" height="1" fill="#8a8a8a"/><rect x="534" y="51" width="1" height="1" fill="#fff"/><rect x="535" y="51" width="1" height="1" fill="#8a8a8a"/><rect x="536" y="51" width="2" height="1" fill="#fff"/><rect x="520" y="52" width="1" height="1" fill="#000"/><rect x="522" y="52" width="1" height="1" fill="#000"/><rect x="524" y="52" width="1" height="1" fill="#000"/><rect x="526" y="52" width="2" height="1" fill="#000"/><rect x="529" y="52" width="9" height="1" fill="#fff"/>
</svg>


<!-- RIGHT PANEL ICONS -->
<svg class="a" style="left:1230px;top:60px;" width="50" height="400">
<g transform="translate(-1230,-60)">
<!-- db copy -->
<path d="M1241.5 75 L1241.5 88 Q1241.5 91 1248.5 91 Q1255.5 91 1255.5 88 L1255.5 75 Q1255.5 72 1248.5 72 Q1241.5 72 1241.5 75 Z" fill="#40d020" stroke="#000" stroke-width="1"/>
<path d="M1241.5 75 Q1241.5 77.5 1248.5 77.5 Q1255.5 77.5 1255.5 75" fill="none" stroke="#000" stroke-width="1"/>
<path d="M1251.5 82 L1251.5 95 Q1251.5 98 1258.5 98 Q1265.5 98 1265.5 95 L1265.5 82 Q1265.5 79.5 1258.5 79.5 Q1251.5 79.5 1251.5 82 Z" fill="#d4d0c8" stroke="#000" stroke-width="1"/>
<path d="M1251.5 82 Q1251.5 84.5 1258.5 84.5 Q1265.5 84.5 1265.5 82" fill="none" stroke="#000" stroke-width="1"/>
<path d="M1250.5 71 Q1254 67 1258 68.5 Q1260 69.5 1260.5 72" fill="none" stroke="#000" stroke-width="1.2"/>
<path d="M1258 76 L1266 68 L1266 76 Z" fill="#000"/>
<!-- reset -->
<rect x="1247" y="109" width="1" height="1" fill="#000"/><rect x="1246" y="110" width="2" height="1" fill="#000"/><rect x="1253" y="110" width="1" height="1" fill="#000"/><rect x="1247" y="111" width="1" height="1" fill="#000"/><rect x="1253" y="111" width="1" height="1" fill="#000"/><rect x="1247" y="112" width="1" height="1" fill="#000"/><rect x="1253" y="112" width="1" height="1" fill="#000"/><rect x="1247" y="113" width="1" height="1" fill="#000"/><rect x="1253" y="113" width="1" height="1" fill="#000"/><rect x="1251" y="114" width="5" height="1" fill="#000"/><rect x="1252" y="115" width="3" height="1" fill="#000"/><rect x="1253" y="116" width="1" height="1" fill="#000"/><rect x="1244" y="118" width="22" height="1" fill="#000"/><rect x="1244" y="119" width="1" height="1" fill="#000"/><rect x="1250" y="119" width="1" height="1" fill="#000"/><rect x="1256" y="119" width="1" height="1" fill="#000"/><rect x="1262" y="119" width="1" height="1" fill="#000"/><rect x="1244" y="120" width="1" height="1" fill="#000"/><rect x="1246" y="120" width="3" height="1" fill="#000"/><rect x="1250" y="120" width="1" height="1" fill="#000"/><rect x="1252" y="120" width="3" height="1" fill="#000"/><rect x="1256" y="120" width="1" height="1" fill="#000"/><rect x="1258" y="120" width="3" height="1" fill="#000"/><rect x="1262" y="120" width="1" height="1" fill="#000"/><rect x="1244" y="121" width="1" height="1" fill="#000"/><rect x="1246" y="121" width="1" height="1" fill="#000"/><rect x="1248" y="121" width="1" height="1" fill="#000"/><rect x="1250" y="121" width="1" height="1" fill="#000"/><rect x="1252" y="121" width="1" height="1" fill="#000"/><rect x="1254" y="121" width="1" height="1" fill="#000"/><rect x="1256" y="121" width="1" height="1" fill="#000"/><rect x="1258" y="121" width="1" height="1" fill="#000"/><rect x="1260" y="121" width="1" height="1" fill="#000"/><rect x="1262" y="121" width="1" height="1" fill="#000"/><rect x="1244" y="122" width="1" height="1" fill="#000"/><rect x="1246" y="122" width="1" height="1" fill="#000"/><rect x="1248" y="122" width="1" height="1" fill="#000"/><rect x="1250" y="122" width="1" height="1" fill="#000"/><rect x="1252" y="122" width="1" height="1" fill="#000"/><rect x="1254" y="122" width="1" height="1" fill="#000"/><rect x="1256" y="122" width="1" height="1" fill="#000"/><rect x="1258" y="122" width="1" height="1" fill="#000"/><rect x="1260" y="122" width="1" height="1" fill="#000"/><rect x="1262" y="122" width="1" height="1" fill="#000"/><rect x="1244" y="123" width="1" height="1" fill="#000"/><rect x="1246" y="123" width="1" height="1" fill="#000"/><rect x="1248" y="123" width="1" height="1" fill="#000"/><rect x="1250" y="123" width="1" height="1" fill="#000"/><rect x="1252" y="123" width="1" height="1" fill="#000"/><rect x="1254" y="123" width="1" height="1" fill="#000"/><rect x="1256" y="123" width="1" height="1" fill="#000"/><rect x="1258" y="123" width="1" height="1" fill="#000"/><rect x="1260" y="123" width="1" height="1" fill="#000"/><rect x="1262" y="123" width="1" height="1" fill="#000"/><rect x="1244" y="124" width="1" height="1" fill="#000"/><rect x="1246" y="124" width="1" height="1" fill="#000"/><rect x="1248" y="124" width="1" height="1" fill="#000"/><rect x="1250" y="124" width="1" height="1" fill="#000"/><rect x="1252" y="124" width="1" height="1" fill="#000"/><rect x="1254" y="124" width="1" height="1" fill="#000"/><rect x="1256" y="124" width="1" height="1" fill="#000"/><rect x="1258" y="124" width="1" height="1" fill="#000"/><rect x="1260" y="124" width="1" height="1" fill="#000"/><rect x="1262" y="124" width="1" height="1" fill="#000"/><rect x="1244" y="125" width="1" height="1" fill="#000"/><rect x="1246" y="125" width="3" height="1" fill="#000"/><rect x="1250" y="125" width="1" height="1" fill="#000"/><rect x="1252" y="125" width="3" height="1" fill="#000"/><rect x="1256" y="125" width="1" height="1" fill="#000"/><rect x="1258" y="125" width="3" height="1" fill="#000"/><rect x="1262" y="125" width="1" height="1" fill="#000"/><rect x="1244" y="126" width="1" height="1" fill="#000"/><rect x="1250" y="126" width="1" height="1" fill="#000"/><rect x="1256" y="126" width="1" height="1" fill="#000"/><rect x="1262" y="126" width="1" height="1" fill="#000"/><rect x="1244" y="127" width="22" height="1" fill="#000"/><rect x="1244" y="129" width="3" height="1" fill="#000"/><rect x="1249" y="129" width="4" height="1" fill="#000"/><rect x="1254" y="129" width="3" height="1" fill="#000"/><rect x="1258" y="129" width="4" height="1" fill="#000"/><rect x="1263" y="129" width="3" height="1" fill="#000"/><rect x="1244" y="130" width="1" height="1" fill="#000"/><rect x="1247" y="130" width="1" height="1" fill="#000"/><rect x="1249" y="130" width="1" height="1" fill="#000"/><rect x="1254" y="130" width="1" height="1" fill="#000"/><rect x="1258" y="130" width="1" height="1" fill="#000"/><rect x="1264" y="130" width="1" height="1" fill="#000"/><rect x="1244" y="131" width="3" height="1" fill="#000"/><rect x="1249" y="131" width="3" height="1" fill="#000"/><rect x="1254" y="131" width="3" height="1" fill="#000"/><rect x="1258" y="131" width="3" height="1" fill="#000"/><rect x="1264" y="131" width="1" height="1" fill="#000"/><rect x="1244" y="132" width="1" height="1" fill="#000"/><rect x="1246" y="132" width="1" height="1" fill="#000"/><rect x="1249" y="132" width="1" height="1" fill="#000"/><rect x="1256" y="132" width="1" height="1" fill="#000"/><rect x="1258" y="132" width="1" height="1" fill="#000"/><rect x="1264" y="132" width="1" height="1" fill="#000"/><rect x="1244" y="133" width="1" height="1" fill="#000"/><rect x="1247" y="133" width="1" height="1" fill="#000"/><rect x="1249" y="133" width="4" height="1" fill="#000"/><rect x="1254" y="133" width="3" height="1" fill="#000"/><rect x="1258" y="133" width="4" height="1" fill="#000"/><rect x="1264" y="133" width="1" height="1" fill="#000"/>
<!-- 0 ruler -->
<ellipse cx="1254" cy="156.8" rx="4.2" ry="8" fill="none" stroke="#000" stroke-width="2.8"/>
<path d="M1242.5 153 L1247.5 157.5 L1242.5 162 Z" fill="none" stroke="#808080" stroke-width="1"/>
<path d="M1265.5 153 L1260.5 157.5 L1265.5 162 Z" fill="none" stroke="#000" stroke-width="1"/>
<rect x="1245" y="172" width="20" height="2" fill="#000"/><rect x="1245" y="168" width="1" height="4" fill="#000"/><rect x="1264" y="168" width="1" height="4" fill="#000"/><rect x="1249" y="169" width="1" height="3" fill="#000"/><rect x="1252" y="169" width="1" height="3" fill="#000"/><rect x="1256" y="169" width="1" height="3" fill="#000"/><rect x="1260" y="169" width="1" height="3" fill="#000"/>
<!-- circuit -->
<path d="M1242 211.5 L1247 211.5 M1244.5 211.5 L1244.5 202.5 L1248 202.5 L1252 199" fill="none" stroke="#000" stroke-width="1"/>
<path d="M1260.5 188 L1260.5 205 M1260.5 207 L1260.5 212" stroke="#000" stroke-width="1"/>
<rect x="1258.5" y="191.5" width="4" height="7" fill="#d4d0c8" stroke="#000" stroke-width="1"/>
<path d="M1253 202.5 L1266 202.5 M1257 205.5 L1264 205.5 M1257 207.5 L1264 207.5 M1258 211.5 L1263 211.5" stroke="#000" stroke-width="1"/>
<circle cx="1260.5" cy="202.5" r="2" fill="#000"/>
<!-- pause -->
<rect x="1250" y="234" width="2" height="11" fill="#000"/><rect x="1255" y="234" width="2" height="11" fill="#000"/>
<!-- 000|0 -->
<path d="M1248.5 276 L1248.5 270.5 L1263.5 270.5 L1263.5 275" fill="none" stroke="#000" stroke-width="1"/>
<rect x="1254" y="267" width="2" height="2" fill="#000"/><rect x="1258" y="267" width="2" height="2" fill="#000"/><rect x="1255" y="269" width="4" height="2" fill="#000"/><rect x="1254" y="271" width="2" height="2" fill="#000"/><rect x="1258" y="271" width="2" height="2" fill="#000"/>
<path d="M1261 274.5 L1266 274.5 L1263.5 277.5 Z" fill="#000"/>
<rect x="1242.5" y="278.5" width="3" height="5" fill="none" stroke="#000" stroke-width="1"/>
<rect x="1247.5" y="278.5" width="3" height="5" fill="none" stroke="#000" stroke-width="1"/>
<rect x="1252.5" y="278.5" width="3" height="5" fill="none" stroke="#000" stroke-width="1"/>
<path d="M1258.5 277 L1258.5 286" stroke="#000" stroke-width="1"/>
<rect x="1261.5" y="278.5" width="3" height="5" fill="none" stroke="#000" stroke-width="1"/>
<!-- copy pages x -->
<rect x="1245.5" y="310.5" width="9" height="11" fill="#d4d0c8" stroke="#000" stroke-width="1"/>
<rect x="1248.5" y="313.5" width="9" height="12" fill="#d4d0c8" stroke="#000" stroke-width="1"/>
<rect x="1251.5" y="316.5" width="9" height="13" fill="#d4d0c8" stroke="#000" stroke-width="1"/>
<path d="M1243 312.5 L1245 312.5 M1243 314.5 L1245 314.5 M1243 316.5 L1245 316.5 M1243 318.5 L1245 318.5 M1243 320.5 L1245 320.5" stroke="#000" stroke-width="1"/>
<rect x="1259" y="306" width="2" height="2" fill="#000"/><rect x="1263" y="306" width="2" height="2" fill="#000"/><rect x="1260" y="308" width="4" height="2" fill="#000"/><rect x="1259" y="310" width="2" height="2" fill="#000"/><rect x="1263" y="310" width="2" height="2" fill="#000"/>
<rect x="1259" y="324" width="3" height="3" fill="#000"/><rect x="1262" y="325" width="2" height="1" fill="#000"/>
<!-- connector -->
<rect x="1241" y="353" width="21" height="2" fill="#000"/><rect x="1241" y="358" width="21" height="2" fill="#000"/>
<rect x="1247" y="352" width="10" height="9" fill="#000"/><rect x="1249" y="351" width="1" height="1" fill="#000"/><rect x="1252" y="351" width="1" height="1" fill="#000"/><rect x="1255" y="351" width="1" height="1" fill="#000"/>
<rect x="1257" y="355" width="9" height="3" fill="#e0e0e0"/>
<rect x="1266" y="350" width="2" height="13" fill="#000"/><rect x="1257" y="351" width="9" height="1" fill="#000"/><rect x="1257" y="361" width="9" height="1" fill="#000"/>
<!-- Hd buttons -->
<rect x="1233" y="376" width="43" height="1" fill="#808080"/><rect x="1233" y="376" width="1" height="38" fill="#808080"/>
<rect x="1233" y="413" width="43" height="1" fill="#fff"/><rect x="1275" y="376" width="1" height="38" fill="#fff"/>
<rect x="1233" y="415" width="43" height="1" fill="#808080"/><rect x="1233" y="415" width="1" height="39" fill="#808080"/>
<rect x="1233" y="453" width="43" height="1" fill="#fff"/><rect x="1275" y="415" width="1" height="39" fill="#fff"/>
<text x="1251" y="392" font-family="Liberation Sans" font-size="9.5" font-weight="bold" fill="#000090" textLength="18" lengthAdjust="spacingAndGlyphs">Hd 0</text>
<path d="M1240 394.5 L1246 394.5" stroke="#000" stroke-width="1"/><rect x="1245" y="394" width="5" height="5" fill="#0000ff"/>
<rect x="1242" y="400" width="27" height="2" fill="#000"/><rect x="1251" y="397" width="9" height="7" fill="#000"/>
<text x="1251" y="431" font-family="Liberation Sans" font-size="9.5" font-weight="bold" fill="#000090" textLength="18" lengthAdjust="spacingAndGlyphs">Hd 1</text>
<path d="M1240 433.5 L1246 433.5" stroke="#000" stroke-width="1"/><rect x="1245" y="433" width="5" height="5" fill="#0000ff"/>
<rect x="1242" y="439" width="27" height="2" fill="#000"/><rect x="1251" y="436" width="9" height="7" fill="#000"/>
</g>
</svg>

<!-- BOTTOM LEDS -->
<div class="led" style="left:12px;top:940px;"></div>
<div class="led on" style="left:52px;top:940px;"></div>
<div class="led" style="left:92px;top:940px;"></div>
<div class="led on" style="left:132px;top:940px;"></div>
<div class="led" style="left:172px;top:940px;"></div>
<div class="led" style="left:212px;top:940px;"></div>
<div class="led" style="left:252px;top:940px;"></div>
<div class="led" style="left:292px;top:940px;"></div>
<div class="lbl" style="left:3px;top:955px;">BSY</div>
<div class="lbl" style="left:43px;top:955px;">DRD</div>
<div class="lbl" style="left:83px;top:955px;">DWF</div>
<div class="lbl" style="left:123px;top:955px;">DSC</div>
<div class="lbl" style="left:163px;top:955px;">DRQ</div>
<div class="lbl" style="left:203px;top:955px;">CRR</div>
<div class="lbl" style="left:243px;top:955px;">IDX</div>
<div class="lbl" style="left:283px;top:955px;">ERR</div>
<div class="led" style="left:342px;top:940px;"></div>
<div class="led" style="left:382px;top:940px;"></div>
<div class="led" style="left:422px;top:940px;"></div>
<div class="led" style="left:462px;top:940px;"></div>
<div class="led" style="left:502px;top:940px;"></div>
<div class="led" style="left:542px;top:940px;"></div>
<div class="led" style="left:582px;top:940px;"></div>
<div class="led" style="left:622px;top:940px;"></div>
<div class="lbl" style="left:333px;top:955px;">BBK</div>
<div class="lbl" style="left:373px;top:955px;">UNC</div>
<div class="lbl" style="left:453px;top:955px;">INF</div>
<div class="lbl" style="left:533px;top:955px;">ABR</div>
<div class="lbl" style="left:573px;top:955px;">TON</div>
<div class="lbl" style="left:613px;top:955px;">AMN</div>
<div class="led" style="left:676px;top:940px;"></div>
<div class="lbl" style="left:667px;top:955px;">RQ</div>
<div class="led on" style="left:1211px;top:940px;"></div>
<div class="led on" style="left:1248px;top:940px;"></div>
<div class="lbl" style="left:1202px;top:955px;">5V</div>
<div class="lbl" style="left:1239px;top:955px;">12V</div>

<!-- TABS -->
<div class="a" style="left:4px;top:890px;width:1218px;height:1px;background:#404040;"></div>
<div class="a" style="left:6px;top:891px;width:41px;height:18px;box-sizing:border-box;border:1px solid;border-color:transparent #404040 #404040 #fff;box-shadow:inset -1px -1px 0 #808080;"></div>
<div class="t" style="left:12px;top:894px;">Log</div>
<div class="a" style="left:47px;top:890px;width:44px;height:21px;box-sizing:border-box;background:#d4d0c8;border:1px solid;border-top:none;border-color:transparent #404040 #404040 #fff;box-shadow:inset -1px -1px 0 #808080;"></div>
<div class="t" style="left:54px;top:896px;">Map</div>
<div class="a" style="left:91px;top:891px;width:41px;height:18px;box-sizing:border-box;border:1px solid;border-color:transparent #404040 #404040 #fff;box-shadow:inset -1px -1px 0 #808080;"></div>
<div class="t" style="left:96px;top:894px;">Status</div>
<div class="a" style="left:132px;top:891px;width:61px;height:18px;box-sizing:border-box;border:1px solid;border-color:transparent #404040 #404040 #fff;box-shadow:inset -1px -1px 0 #808080;"></div>
<div class="t" style="left:138px;top:894px;">Processes</div>

<!-- misc glyphs -->
<svg class="a" style="left:0;top:0;" width="1280" height="975">
<!-- scrollbar arrows -->
<path d="M1206 162 L1213 162 L1209.5 158 Z" fill="#000"/>
<path d="M1206 842 L1213 842 L1209.5 846 Z" fill="#000"/>
<!-- D arrow button -->
<text x="190" y="875" font-family="Liberation Sans" font-weight="bold" font-size="9" fill="#000">D</text>
<path d="M197 869 L199 869 L199 873 L201 873 L198 877 L195 873 L197 873 Z" fill="#e00000"/>
<!-- pause in LBA row -->
<rect x="298" y="866" width="2" height="11" fill="#000"/><rect x="303" y="866" width="2" height="11" fill="#000"/>
</svg>

<!-- DIALOG -->
<div class="a" style="left:443px;top:279px;width:392px;height:395px;box-sizing:border-box;background:#d4d0c8;border:1px solid;border-color:#d4d0c8 #404040 #404040 #d4d0c8;box-shadow:inset 1px 1px 0 #fff,inset -1px -1px 0 #808080;"></div>
<div class="a" style="left:446px;top:281px;width:387px;height:15px;background:linear-gradient(to right,#808080,#c0c0c0);"></div>
<div class="t" style="left:448px;top:280px;font-weight:bold;color:#d4d0c8;font-size:14px;line-height:14px;">Task statistics</div>
<div class="btn" style="left:821px;top:283px;width:10px;height:11px;"></div>
<div class="t" style="left:453px;top:298px;color:#808080;font-size:12px;">Service</div>
<div class="a" style="left:446px;top:316px;width:387px;height:1px;background:#808080;"></div>
<div class="a" style="left:446px;top:317px;width:387px;height:1px;background:#fff;"></div>

<div class="rl" style="top:342px;">Read successfully</div>
<div class="vbox" style="top:338px;"><span class="val">156 301 462</span></div>
<div class="sw" style="top:342px;background:#00ff00;"></div>
<div class="rl" style="top:366px;">Read with errors</div>
<div class="vbox" style="top:362px;"><span class="val">0</span></div>
<div class="sw" style="top:366px;background:#008000;"></div>
<div class="rl" style="top:390px;">Read without CRC control</div>
<div class="vbox" style="top:386px;"><span class="val">0</span></div>
<div class="sw" style="top:390px;background:#808080;"></div>
<div class="rl" style="top:414px;">Reading failed</div>
<div class="vbox" style="top:410px;"><span class="val">26</span></div>
<div class="sw" style="top:414px;background:#000;"></div>
<div class="rl" style="top:438px;">Loss of readiness</div>
<div class="vbox" style="top:434px;"><span class="val">0</span></div>
<div class="sw" style="top:438px;background:#ff0000;"></div>
<div class="rl" style="top:462px;">Skipped</div>
<div class="vbox" style="top:458px;"><span class="val">0</span></div>
<div class="sw" style="top:462px;background:#ffff00;"></div>
<div class="rl" style="top:487px;">Changed</div>
<div class="vbox" style="top:482px;"><span class="val">0</span></div>
<div class="sw" style="top:486px;background:#00ffff;"></div>
<div class="rl" style="top:512px;">Utility read</div>
<div class="vbox" style="top:507px;"><span class="val">0</span></div>
<div class="sw" style="top:511px;background:#ff8000;"></div>
<div class="rl" style="top:537px;">Decrypt</div>
<div class="vbox" style="top:532px;"><span class="val">0</span></div>
<div class="sw" style="top:536px;background:#808000;"></div>
<div class="a" style="left:452px;top:569px;width:369px;height:1px;background:#808080;"></div>
<div class="a" style="left:452px;top:570px;width:369px;height:1px;background:#fff;"></div>
<div class="rl" style="top:580px;">Reminder</div>
<div class="vbox" style="top:576px;"><span class="val" style="right:0;">0</span></div>
<div class="sw" style="top:581px;left:806px;background:#fff;"></div>

<div class="a" style="left:746px;top:641px;width:82px;height:25px;box-sizing:border-box;border:1px solid #000;"></div>
<div class="btn" style="left:747px;top:642px;width:80px;height:23px;"></div>
<div class="t" style="left:791px;top:646px;font-size:12px;">OK</div>


<svg class="a" style="left:0;top:0;" width="1280" height="975">
<rect x="823" y="285" width="1" height="1" fill="#000"/><rect x="828" y="285" width="1" height="1" fill="#000"/><rect x="824" y="286" width="1" height="1" fill="#000"/><rect x="827" y="286" width="1" height="1" fill="#000"/><rect x="825" y="287" width="1" height="1" fill="#000"/><rect x="826" y="287" width="1" height="1" fill="#000"/><rect x="826" y="288" width="1" height="1" fill="#000"/><rect x="825" y="288" width="1" height="1" fill="#000"/><rect x="827" y="289" width="1" height="1" fill="#000"/><rect x="824" y="289" width="1" height="1" fill="#000"/><rect x="828" y="290" width="1" height="1" fill="#000"/><rect x="823" y="290" width="1" height="1" fill="#000"/>
<path d="M771.5 653 L775.5 658.5 L784.5 648" fill="none" stroke="#145a24" stroke-width="3.4" stroke-linecap="round" stroke-linejoin="round"/><path d="M772 653 L775.5 657 L784 648.5" fill="none" stroke="#3cb050" stroke-width="1.2" stroke-linecap="round"/>
</svg>
</body></html>
